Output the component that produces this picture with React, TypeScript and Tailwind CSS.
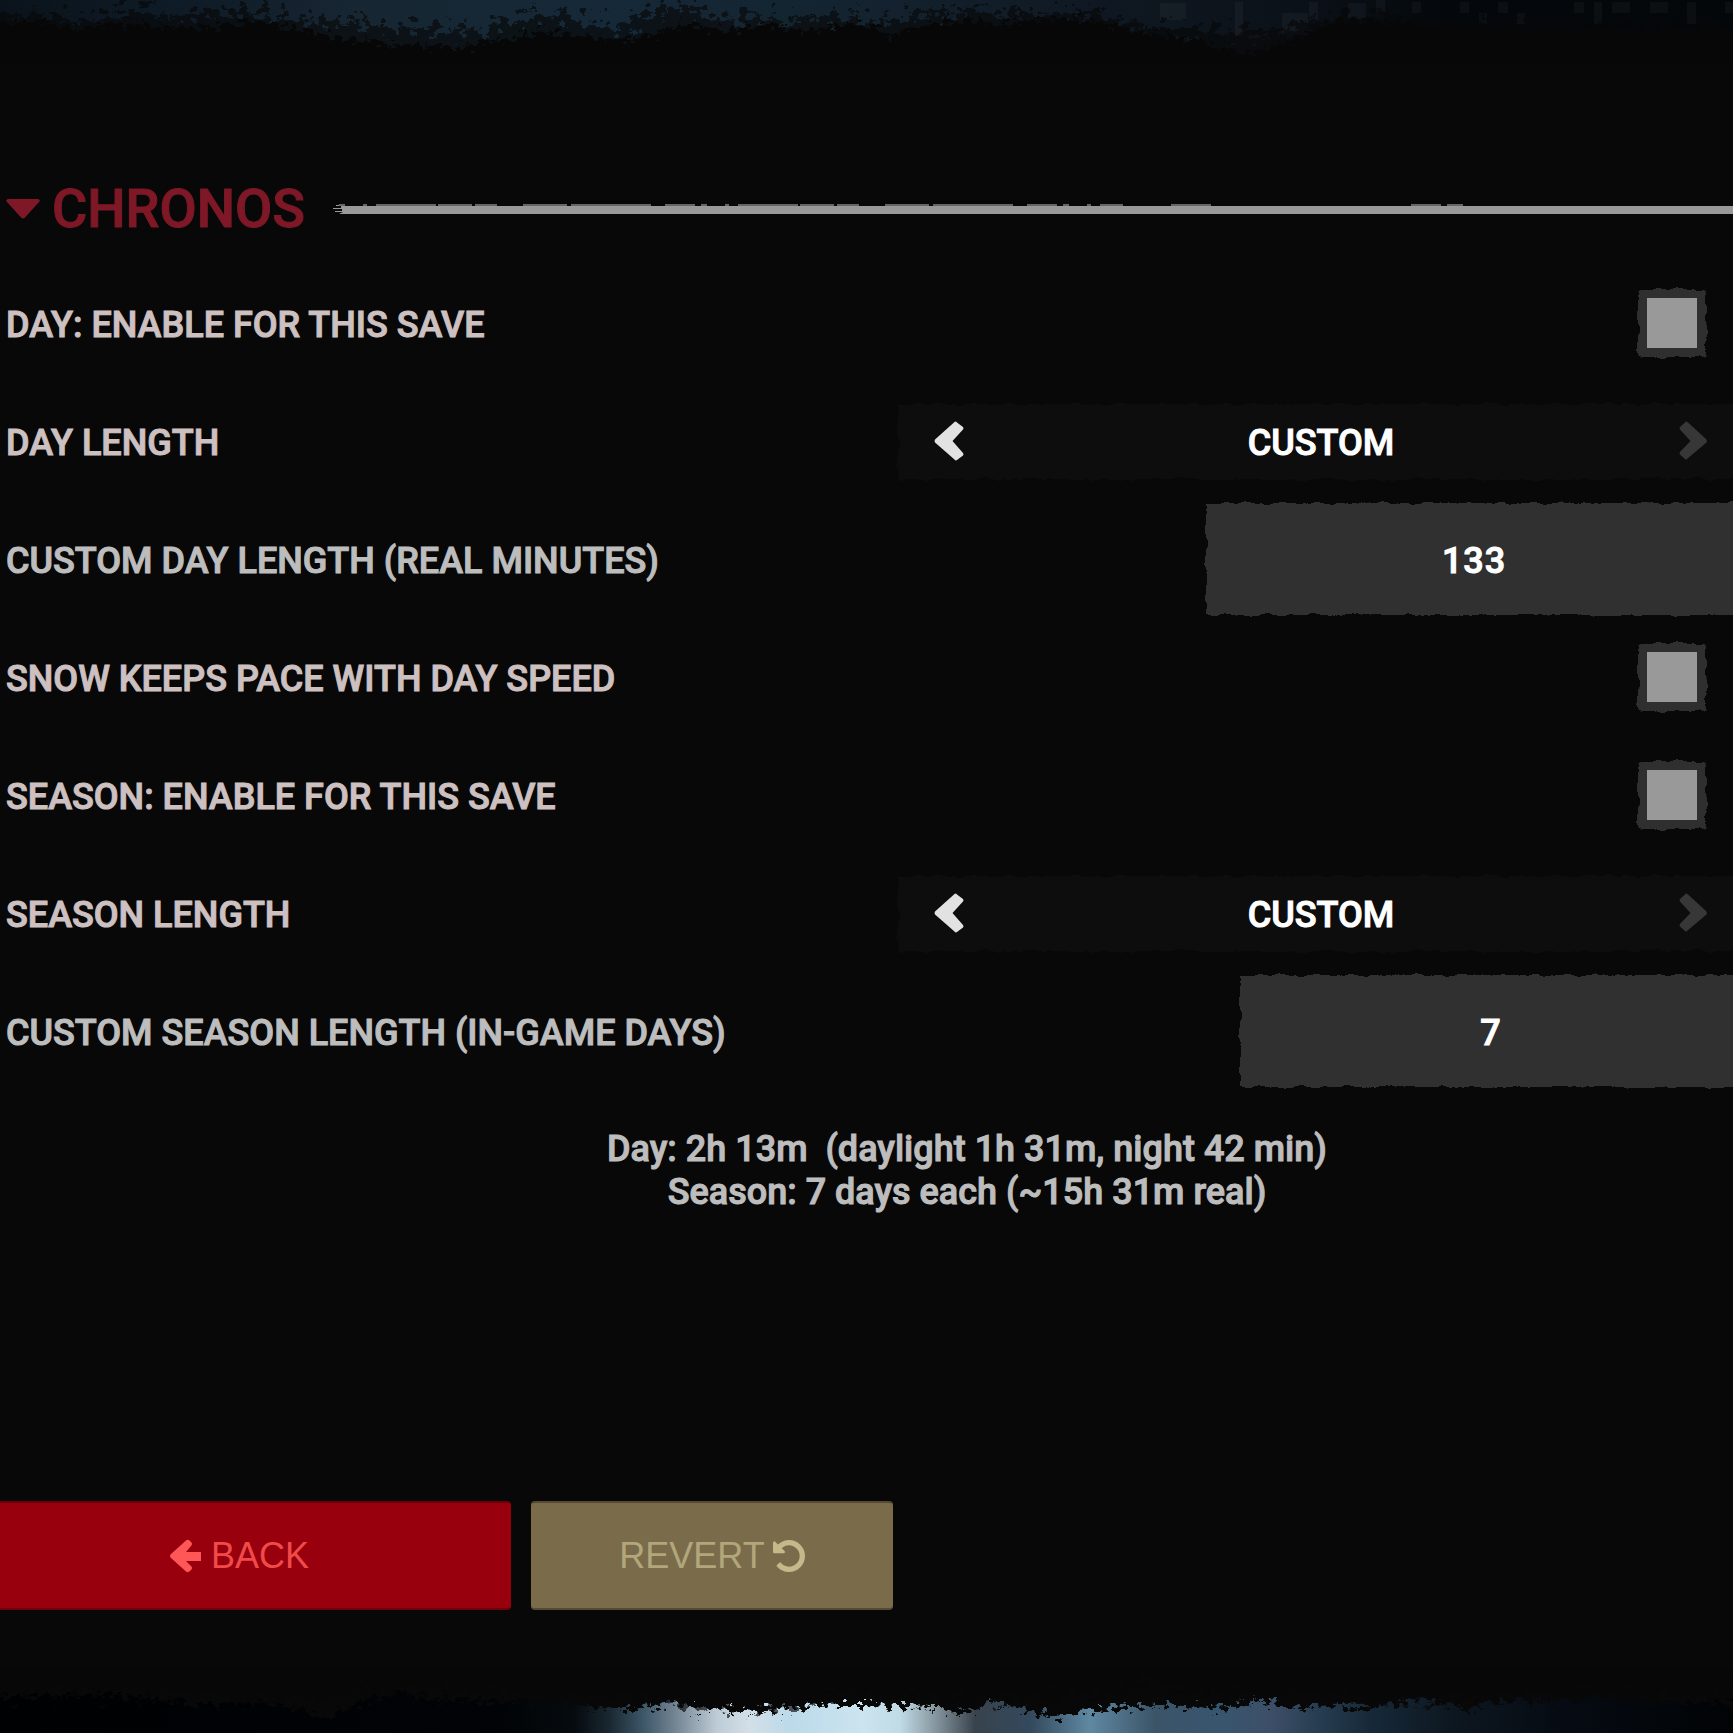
import { useId, useState, type ReactNode } from "react";

// sky that shows through the torn top and bottom edges of the panel
const topSky = [
  [0, "#0a131b"],
  [200, "#0f1c28"],
  [350, "#162632"],
  [600, "#162938"],
  [863, "#13232f"],
  [1100, "#0f1822"],
  [1300, "#0b1118"],
  [1450, "#04080c"],
  [1733, "#03070a"],
] as const;

const bottomSky = [
  [0, "#000103"],
  [500, "#010306"],
  [575, "#060b0f"],
  [610, "#1a2832"],
  [645, "#3f596b"],
  [680, "#7c8c9a"],
  [716, "#bccbd6"],
  [749, "#d3dfe8"],
  [790, "#bcdaea"],
  [863, "#cbe4ef"],
  [900, "#c0dbe6"],
  [935, "#8797a0"],
  [975, "#38434d"],
  [1030, "#33495c"],
  [1090, "#5f88a3"],
  [1155, "#3b5468"],
  [1220, "#38556f"],
  [1270, "#3d4f68"],
  [1320, "#263c50"],
  [1370, "#172939"],
  [1450, "#0d1720"],
  [1560, "#060b13"],
  [1733, "#010305"],
] as const;

const topEdge =
  "M-20 80V25L0 25L40 20L70 28L110 24L170 27L210 27L255 20L275 26L330 36L390 44L460 47L510 38L540 31L580 34L615 41L650 36L680 24L730 31L765 24L800 31L840 26L863 24L893 36L920 26L960 20L1000 24L1050 18L1090 20L1130 29L1180 38L1210 45L1250 54L1290 42L1330 22L1390 20L1440 28L1530 35L1600 30L1760 31V80Z";
const topMist =
  "M-20 80V18L40 14L90 22L145 6L165 20L210 12L250 12L280 18L340 22L400 26L480 30L520 18L560 15L620 30L650 8L690 6L720 20L760 16L800 22L840 16L880 22L930 14L980 8L1040 14L1090 14L1150 28L1205 30L1260 34L1320 20L1400 18L1540 26L1760 24V80Z";
const bottomEdge =
  "M-20 -20V28L0 28L80 24L130 27L200 36L260 34L300 40L325 50L360 34L400 22L430 30L500 33L560 32L610 40L640 40L670 33L700 40L760 42L800 38L835 36L863 36L940 38L955 44L980 42L990 32L1030 42L1060 49L1100 40L1170 36L1220 40L1265 31L1290 40L1340 36L1370 40L1420 30L1450 35L1467 42L1485 33L1540 31L1580 28L1650 32L1760 36V-20Z";
const bottomMist =
  "M-20 -20V24L130 22L300 32L400 18L560 28L620 26L660 30L700 37L760 40L810 33L863 19L900 22L950 30L1040 28L1100 24L1155 10L1200 22L1260 28L1330 22L1390 30L1580 26L1760 28V-20Z";

function TornEdge({ stops, edge, mist, children }: {
  stops: readonly (readonly [number, string])[];
  edge: string;
  mist: string;
  children?: ReactNode;
}) {
  const id = useId();
  return (
    <svg
      className="block h-16 w-full shrink-0"
      viewBox="0 0 1733 64"
      preserveAspectRatio="none"
      aria-hidden="true"
    >
      <linearGradient id={id} gradientUnits="userSpaceOnUse" x1="0" x2="1733" y1="0" y2="0">
        {stops.map(([x, color]) => (
          <stop key={x} offset={x / 1733} stopColor={color} />
        ))}
      </linearGradient>
      <rect width="1733" height="64" fill={`url(#${id})`} />
      {children}
      <path d={edge} fill="#080808" filter="url(#torn)" />
      <path d={mist} fill="#080808" fillOpacity="0.65" filter="url(#shred)" />
    </svg>
  );
}

const skyBlocks = [
  [1160, 3, 26, 17], [1235, 2, 8, 34], [1282, 13, 26, 22], [1309, 2, 9, 18],
  [1348, 3, 18, 16], [1376, 0, 9, 12], [1412, 2, 9, 11], [1460, 2, 9, 11],
  [1479, 13, 8, 11], [1498, 2, 10, 11], [1517, 13, 8, 11], [1574, 2, 10, 11],
  [1594, 2, 8, 22], [1612, 2, 18, 11], [1650, 2, 18, 11], [1687, 2, 9, 22],
  [1725, 2, 8, 11],
];

function Filters() {
  return (
    <svg className="absolute size-0" aria-hidden="true">
      <filter id="torn" x="-2%" y="-20%" width="104%" height="140%" colorInterpolationFilters="sRGB">
        <feTurbulence type="fractalNoise" baseFrequency="0.14 0.18" numOctaves="4" seed="4" />
        <feDisplacementMap in="SourceGraphic" scale="24" xChannelSelector="R" yChannelSelector="G" />
      </filter>
      <filter id="shred" x="-2%" y="-20%" width="104%" height="140%" colorInterpolationFilters="sRGB">
        <feTurbulence type="fractalNoise" baseFrequency="0.1 0.14" numOctaves="5" seed="9" />
        <feDisplacementMap in="SourceGraphic" scale="52" xChannelSelector="R" yChannelSelector="G" />
      </filter>
      <filter id="rough" x="-5%" y="-5%" width="110%" height="110%" colorInterpolationFilters="sRGB">
        <feTurbulence type="fractalNoise" baseFrequency="0.06" numOctaves="5" seed="2" />
        <feDisplacementMap in="SourceGraphic" scale="7" xChannelSelector="R" yChannelSelector="G" />
      </filter>
    </svg>
  );
}

function Row({ label, htmlFor, muted, children }: {
  label: string;
  htmlFor: string;
  muted?: boolean;
  children: ReactNode;
}) {
  return (
    <div className="flex h-[118px] items-center justify-between">
      <label
        htmlFor={htmlFor}
        className={muted ? "pt-1 text-[#bdbdbd]" : "pt-1 text-[#cdc0c0]"}
      >
        {label}
      </label>
      {children}
    </div>
  );
}

function ToggleRow({ label }: { label: string }) {
  const id = useId();
  return (
    <Row label={label} htmlFor={id}>
      <div className="relative mr-9 flex size-[68px] items-center justify-center">
        <span className="absolute inset-0 rounded-sm bg-[#2f2f2f] [filter:url(#rough)]" />
        <input
          id={id}
          type="checkbox"
          className="relative size-[50px] appearance-none bg-[#999] checked:bg-[#7e1827]"
        />
      </div>
    </Row>
  );
}

function ChoiceRow({ label, value }: { label: string; value: string }) {
  const id = useId();
  return (
    <Row label={label} htmlFor={id}>
      <div className="relative flex h-[75px] w-[844px] items-center justify-between pr-[34px] pl-9">
        <span className="absolute inset-0 bg-[#0d0d0d] [filter:url(#rough)]" />
        <button type="button" aria-label="Previous" className="relative text-[#e2e2e2]">
          <svg className="h-10 w-[30px]" viewBox="0 0 30 40" fill="currentColor">
            <path d="M20.5 1Q22 0 23 1.500L29 6Q30 7 29 8.500L18.500 20L29 32Q30 33.500 29 34.500L23 39Q21.500 40 20.500 38.500L1 21.500Q0 20 1 18.500Z" />
          </svg>
        </button>
        <output id={id} className="relative pt-1 text-white">
          {value}
        </output>
        <button type="button" aria-label="Next" disabled className="relative text-[#373737]">
          <svg className="h-10 w-[30px]" viewBox="0 0 30 40" fill="currentColor">
            <path d="M9.500 1Q8 0 7 1.500L2 6Q1 7 2 8.500L12.500 20L2 31Q1 32.500 2 33.500L7 38Q8.500 39 9.500 37.500L28.500 21.500Q29.500 20 28.500 18.500Z" />
          </svg>
        </button>
      </div>
    </Row>
  );
}

function NumberRow({ label, initial, wide }: { label: string; initial: string; wide?: boolean }) {
  const id = useId();
  const [value, setValue] = useState(initial);
  return (
    <Row label={label} htmlFor={id} muted>
      <div className={`relative h-[112px] ${wide ? "w-[536px]" : "w-[502px]"}`}>
        <span className="absolute inset-0 bg-[#303030] [filter:url(#rough)]" />
        <input
          id={id}
          type="text"
          inputMode="numeric"
          value={value}
          onChange={(e) => setValue(e.target.value)}
          className="relative size-full bg-transparent pt-1 text-center tracking-wide text-white outline-none"
        />
      </div>
    </Row>
  );
}

export default function App() {
  return (
    <div className="flex min-h-screen flex-col overflow-hidden bg-[#080808] font-['Roboto',sans-serif] text-4xl font-medium">
      <Filters />
      <TornEdge stops={topSky} edge={topEdge} mist={topMist}>
        {skyBlocks.map(([x, y, w, h]) => (
          <rect key={`${x}-${y}`} x={x} y={y} width={w} height={h} fill="#fff" fillOpacity="0.035" />
        ))}
      </TornEdge>

      <main className="-mr-[9px] pt-[90px] pl-1.5 [-webkit-text-stroke:1px_currentColor]">
        <div className="flex h-[110px] items-center">
          <h2>
            <button type="button" className="flex items-center gap-3 text-[54px] leading-none text-[#7e1827]">
              <svg className="h-5 w-[34px]" viewBox="0 0 34 20" fill="currentColor">
                <path d="M2 0H32Q35 1 33 3L19 18.500Q17 20.500 15 18.500L1 3Q-1 1 2 0Z" />
              </svg>
              CHRONOS
            </button>
          </h2>
          <svg className="ml-7 h-3 flex-1" viewBox="0 0 1409 12" preserveAspectRatio="none" aria-hidden="true">
            <path
              fill="#999"
              d="M12 3H1409V11H6L10 9H2V8H9V6H0V5H8V3H3V2H11Z"
            />
            <path
              stroke="#666"
              strokeWidth="2"
              strokeDasharray="6 18 4 9 60 2 34 3 22 26 44 4 80 14 30 6"
              d="M6 2H790"
            />
            <path stroke="#666" strokeWidth="2" strokeDasharray="40 200 30 6 16 300" d="M838 2H1400" />
          </svg>
        </div>

        <ToggleRow label="DAY: ENABLE FOR THIS SAVE" />
        <ChoiceRow label="DAY LENGTH" value="CUSTOM" />
        <NumberRow label="CUSTOM DAY LENGTH (REAL MINUTES)" initial="133" wide />
        <ToggleRow label="SNOW KEEPS PACE WITH DAY SPEED" />
        <ToggleRow label="SEASON: ENABLE FOR THIS SAVE" />
        <ChoiceRow label="SEASON LENGTH" value="CUSTOM" />
        <NumberRow label="CUSTOM SEASON LENGTH (IN-GAME DAYS)" initial="7" />

        <p className="mt-[38px] pl-[186px] text-center leading-[43px] text-[#bdbdbd]">
          Day: 2h 13m{"\u00a0 "}(daylight 1h 31m, night 42 min)
          <br />
          Season: 7 days each (~15h 31m real)
        </p>
      </main>

      <footer className="mt-auto mb-[59px] -ml-8 flex gap-5 font-['Liberation_Sans',sans-serif] font-normal">
        <button
          type="button"
          className="flex h-[109px] w-[543px] items-center justify-center gap-2.5 rounded border-y-2 border-[#6b0209] bg-[#97000c] text-[#f04a4a]"
        >
          <svg className="h-[34px] w-[31px]" viewBox="0 0 31 34" fill="#ff5757">
            <path d="M16 1.500Q18 0 20 2L21 3Q23 5 21 7L16 13H31V22H16L21 27Q23 29 21 31L20 32Q18 34 16 32.500L1 19Q-1 17 1 15Z" />
          </svg>
          BACK
        </button>
        <button
          type="button"
          className="flex h-[109px] w-[362px] items-center justify-center gap-2 rounded border-y-2 border-[#574a33] bg-[#7a6c4b] text-[#b1a77b]"
        >
          REVERT
          <svg className="size-8" viewBox="128 128 1536 1536" fill="#c4b98a">
            <path d="M1664 896q0 156-61 298t-164 245-245 164-298 61q-172 0-327-72.500t-264-204.500q-7-10-6.500-22.500t8.500-20.500l137-138q10-9 25-9 16 2 23 12 73 95 179 147t225 52q104 0 198.500-40.500t163.500-109.500 109.500-163.500 40.500-198.500-40.500-198.500-109.500-163.500-163.500-109.500-198.500-40.500q-98 0-188 35.500t-160 101.500l137 138q31 30 14 69-17 40-59 40h-448q-26 0-45-19t-19-45v-448q0-42 40-59 39-17 69 14l130 129q107-101 244.500-156.500t284.500-55.500q156 0 298 61t245 164 164 245 61 298z" />
          </svg>
        </button>
      </footer>

      <TornEdge stops={bottomSky} edge={bottomEdge} mist={bottomMist} />
    </div>
  );
}
